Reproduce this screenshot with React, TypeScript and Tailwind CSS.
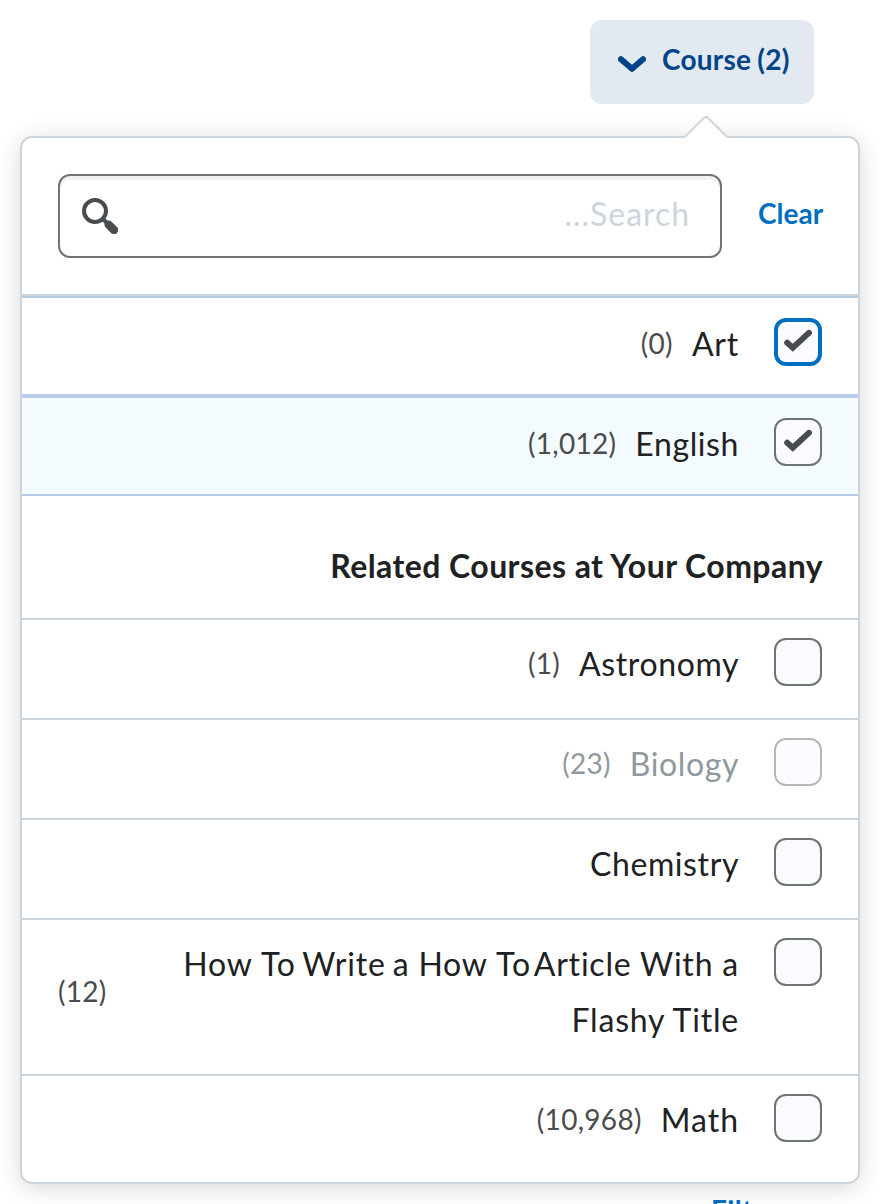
import React from "react";
import clsx from "clsx";

type Course = {
  name: string;
  label: React.ReactNode;
  count?: string;
  tracking?: string;
  wraps?: boolean;
  checked?: boolean;
  focused?: boolean;
  disabled?: boolean;
};

const selected: Course[] = [
  { name: "art", label: "Art", count: "(0)", tracking: "tracking-[0.8px]", checked: true, focused: true },
  { name: "english", label: "English", count: "(1,012)", checked: true },
];

const related: Course[] = [
  { name: "astronomy", label: "Astronomy", count: "(1)" },
  { name: "biology", label: "Biology", count: "(23)", disabled: true },
  { name: "chemistry", label: "Chemistry" },
  {
    name: "how-to",
    label: (
      <>
        How <span className="[word-spacing:-2px]">To Write a</span> How{" "}
        <span className="[word-spacing:-5px]">To Article</span> With a
        <br />
        Flashy Title
      </>
    ),
    count: "(12)",
    tracking: "tracking-[0.8px]",
    wraps: true,
  },
  { name: "math", label: "Math", count: "(10,968)", tracking: "tracking-[1px]" },
];

function Checkbox({ checked, focused, disabled }: Course) {
  return (
    <span
      className={clsx(
        "flex size-12 shrink-0 items-center justify-center rounded-[12px] bg-[#f9fbff]",
        focused ? "border-4 border-[#006fbf]" : "border-2 border-[#6e7376]",
        disabled && "opacity-50",
      )}
    >
      {checked && (
        <svg className="size-10 shrink-0" viewBox="0 0 40 40" fill="none">
          <path d="M9.2 20.8 L14.8 25.8 L30.9 10.9" stroke="#494c4e" strokeWidth="6" strokeLinecap="round" strokeLinejoin="miter" />
        </svg>
      )}
    </span>
  );
}

function CourseContent({ course }: { course: Course }) {
  return (
    <div className="flex items-start justify-end px-9">
      <div className={clsx("flex grow items-center", course.wraps ? "justify-between" : "justify-end")}>
        {course.count && (
          <span
            className={clsx(
              "mr-[19px] pb-0.5 text-[28px] leading-[54px] tracking-[0.3px]",
              course.disabled ? "text-[#90989d]" : "text-[#494c4e]",
            )}
          >
            {course.count}
          </span>
        )}
        <span
          className={clsx(
            "whitespace-nowrap text-right text-[32px] leading-[56px]",
            course.tracking ?? "tracking-[0.6px]",
            course.disabled ? "text-[#90989d]" : "text-[#202122]",
          )}
        >
          {course.label}
        </span>
      </div>
      <div className="ml-[35px] pt-0.5">
        <Checkbox {...course} />
      </div>
    </div>
  );
}

export default function App() {
  return (
    <div className="h-[1204px] w-[880px] overflow-hidden bg-white pt-5 font-[Lato,sans-serif] text-[#202122]">
      <div className="flex justify-end pr-[66px]">
        <button className="flex h-[84px] w-[224px] items-center rounded-[12px] bg-[#e3e9f1] pl-[28px]">
          <svg className="mt-1 h-[17px] w-7" viewBox="0 0 28 17" fill="none">
            <path d="M3 3.3 L14 12.8 L25 3.3" stroke="#004489" strokeWidth="6" strokeLinecap="round" strokeLinejoin="round" />
          </svg>
          <span className="ml-4 whitespace-nowrap pb-1.5 text-[28px] font-bold leading-9 tracking-[0.25px] text-[#004489] [word-spacing:-1px]">
            Course (2)
          </span>
        </button>
      </div>

      <div className="relative mx-5 mt-8 h-[1048px] rounded-[12px] border-2 border-[#cdd5dc] bg-white shadow-[0_4px_24px_rgba(0,0,0,0.15)]">
        <svg className="absolute left-[660px] top-[-24px] h-6 w-12" viewBox="0 0 48 24">
          <path d="M2 24 L21.5 4.5 Q24 2 26.5 4.5 L46 24 Z" fill="#fff" />
          <path d="M2.5 23.3 L22 3.9 Q24 1.9 26 3.9 L45.5 23.3" fill="none" stroke="#cdd5dc" strokeWidth="2" />
        </svg>

        <div className="flex h-[158px] items-start border-b-2 border-[#cdd5dc] px-9 pt-9">
          <div className="flex h-[84px] w-[664px] shrink-0 items-center justify-between rounded-[12px] border-2 border-[#6e7376] pl-[22px] pr-[30px] shadow-[inset_0_4px_0_0_#eff1f2]">
            <svg className="size-9" viewBox="0 0 36 36" fill="none">
              <circle cx="13" cy="13" r="11" stroke="#494c4e" strokeWidth="4" />
              <path d="M20.5 20.5 L26 26" stroke="#494c4e" strokeWidth="4" />
              <path d="M26.6 26.6 L32 32" stroke="#494c4e" strokeWidth="8.4" strokeLinecap="round" />
            </svg>
            <span className="pb-1 text-[32px] leading-12 tracking-[0.95px] text-[#cdd5dc]">...Search</span>
          </div>
          <span className="ml-9 mt-[21px] text-[28px] font-bold leading-9 text-[#006fbf]">Clear</span>
        </div>

        {selected.map((course, i) => (
          <div key={course.name} className={clsx("h-[100px] border-y-2 border-[#b6cbe8] pt-[18px]", i === 1 && "bg-[#f3fbff]")}>
            <CourseContent course={course} />
          </div>
        ))}

        <h3 className="h-[122px] pl-9 pr-[35px] pt-[42px] text-right text-[32px] font-bold leading-[56px] tracking-[0.43px]">
          Related Courses at Your Company
        </h3>

        {related.map((course) => (
          <div key={course.name} className={clsx("border-t-2 border-[#cdd5dc] pt-4", course.wraps ? "h-[156px]" : "h-[100px]")}>
            <CourseContent course={course} />
          </div>
        ))}
      </div>
      <div className="ml-[711px] mt-[8px] text-[28px] font-bold leading-9 tracking-[0.4px] text-[#006fbf]">Filter</div>
    </div>
  );
}
